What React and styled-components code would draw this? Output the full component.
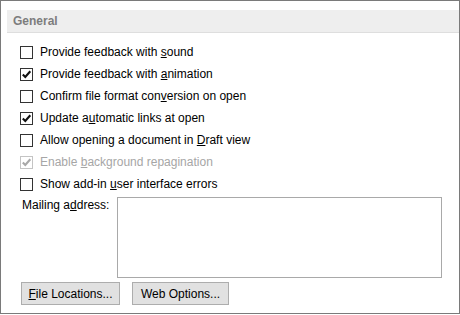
import React from "react";
import styled, { createGlobalStyle } from "styled-components";

const Global = createGlobalStyle`
  html, body { margin: 0; padding: 0; background: #ffffff; }
  body { font-family: "Liberation Sans", Arial, sans-serif; }
  * { box-sizing: border-box; }
`;

const Frame = styled.div`
  width: 460px;
  height: 314px;
  border: 1px solid #7a7a7a;
  background: #ffffff;
  padding-top: 9px;
  display: flex;
  flex-direction: column;
  font-size: 12px;
  color: #000000;
`;

const SectionHeader = styled.div`
  margin-left: 6px;
  height: 23px;
  background: #eeeeee;
  border-bottom: 1px solid #dedede;
  padding-left: 6px;
  display: flex;
  align-items: center;
  font-weight: bold;
  font-size: 12px;
  color: #7d7d7d;
`;

const Options = styled.div`
  display: flex;
  flex-direction: column;
  padding: 8px 0 0 19px;
`;

const Row = styled.label`
  height: 22px;
  display: flex;
  align-items: center;
  gap: 7px;
  color: ${(p) => (p.$disabled ? "#a6a6a6" : "#000000")};
`;

const Box = styled.span`
  width: 13px;
  height: 13px;
  border: 1px solid ${(p) => (p.$disabled ? "#c4c4c4" : "#333333")};
  background: #ffffff;
  display: flex;
  align-items: center;
  justify-content: center;
  flex-shrink: 0;
`;

const Key = styled.span`
  text-decoration: underline;
  text-underline-offset: 1px;
`;

const MailRow = styled.div`
  display: flex;
  margin-top: 2px;
  padding-left: 21px;
`;

const MailLabel = styled.div`
  width: 95px;
  margin-top: 1px;
  line-height: 14px;
`;

const AddressBox = styled.div`
  width: 325px;
  height: 81px;
  border: 1px solid #a9a9a9;
  background: #ffffff;
`;

const ButtonBar = styled.div`
  display: flex;
  gap: 12px;
  padding-left: 20px;
  margin-top: 4px;
`;

const Button = styled.button`
  width: ${(p) => p.$w}px;
  height: 23px;
  background: #e1e1e1;
  border: 1px solid #adadad;
  font-family: "Liberation Sans", Arial, sans-serif;
  font-size: 12px;
  color: #000000;
  padding: 0;
  display: flex;
  align-items: center;
  justify-content: center;
`;

const Check = ({ color }) => (
  <svg width="11" height="11" viewBox="0 0 11 11">
    <polyline
      points="1.8,5.4 4.3,8 9.3,2.2"
      fill="none"
      stroke={color}
      strokeWidth="2.1"
    />
  </svg>
);

const Option = ({ checked, disabled, children }) => (
  <Row $disabled={disabled}>
    <Box $disabled={disabled}>
      {checked && <Check color={disabled ? "#a8a8a8" : "#111111"} />}
    </Box>
    <span>{children}</span>
  </Row>
);

export default function App() {
  return (
    <>
      <Global />
      <Frame>
        <SectionHeader>General</SectionHeader>
        <Options>
          <Option>
            Provide feedback with <Key>s</Key>ound
          </Option>
          <Option checked>
            Provide feedback with <Key>a</Key>nimation
          </Option>
          <Option>
            Confirm file format con<Key>v</Key>ersion on open
          </Option>
          <Option checked>
            Update a<Key>u</Key>tomatic links at open
          </Option>
          <Option>
            Allow opening a document in <Key>D</Key>raft view
          </Option>
          <Option checked disabled>
            Enable <Key>b</Key>ackground repagination
          </Option>
          <Option>
            Show add-in <Key>u</Key>ser interface errors
          </Option>
        </Options>
        <MailRow>
          <MailLabel>
            Mailing a<Key>d</Key>dress:
          </MailLabel>
          <AddressBox />
        </MailRow>
        <ButtonBar>
          <Button $w={99}>
            <span>
              <Key>F</Key>ile Locations...
            </span>
          </Button>
          <Button $w={97}>Web Options...</Button>
        </ButtonBar>
      </Frame>
    </>
  );
}
